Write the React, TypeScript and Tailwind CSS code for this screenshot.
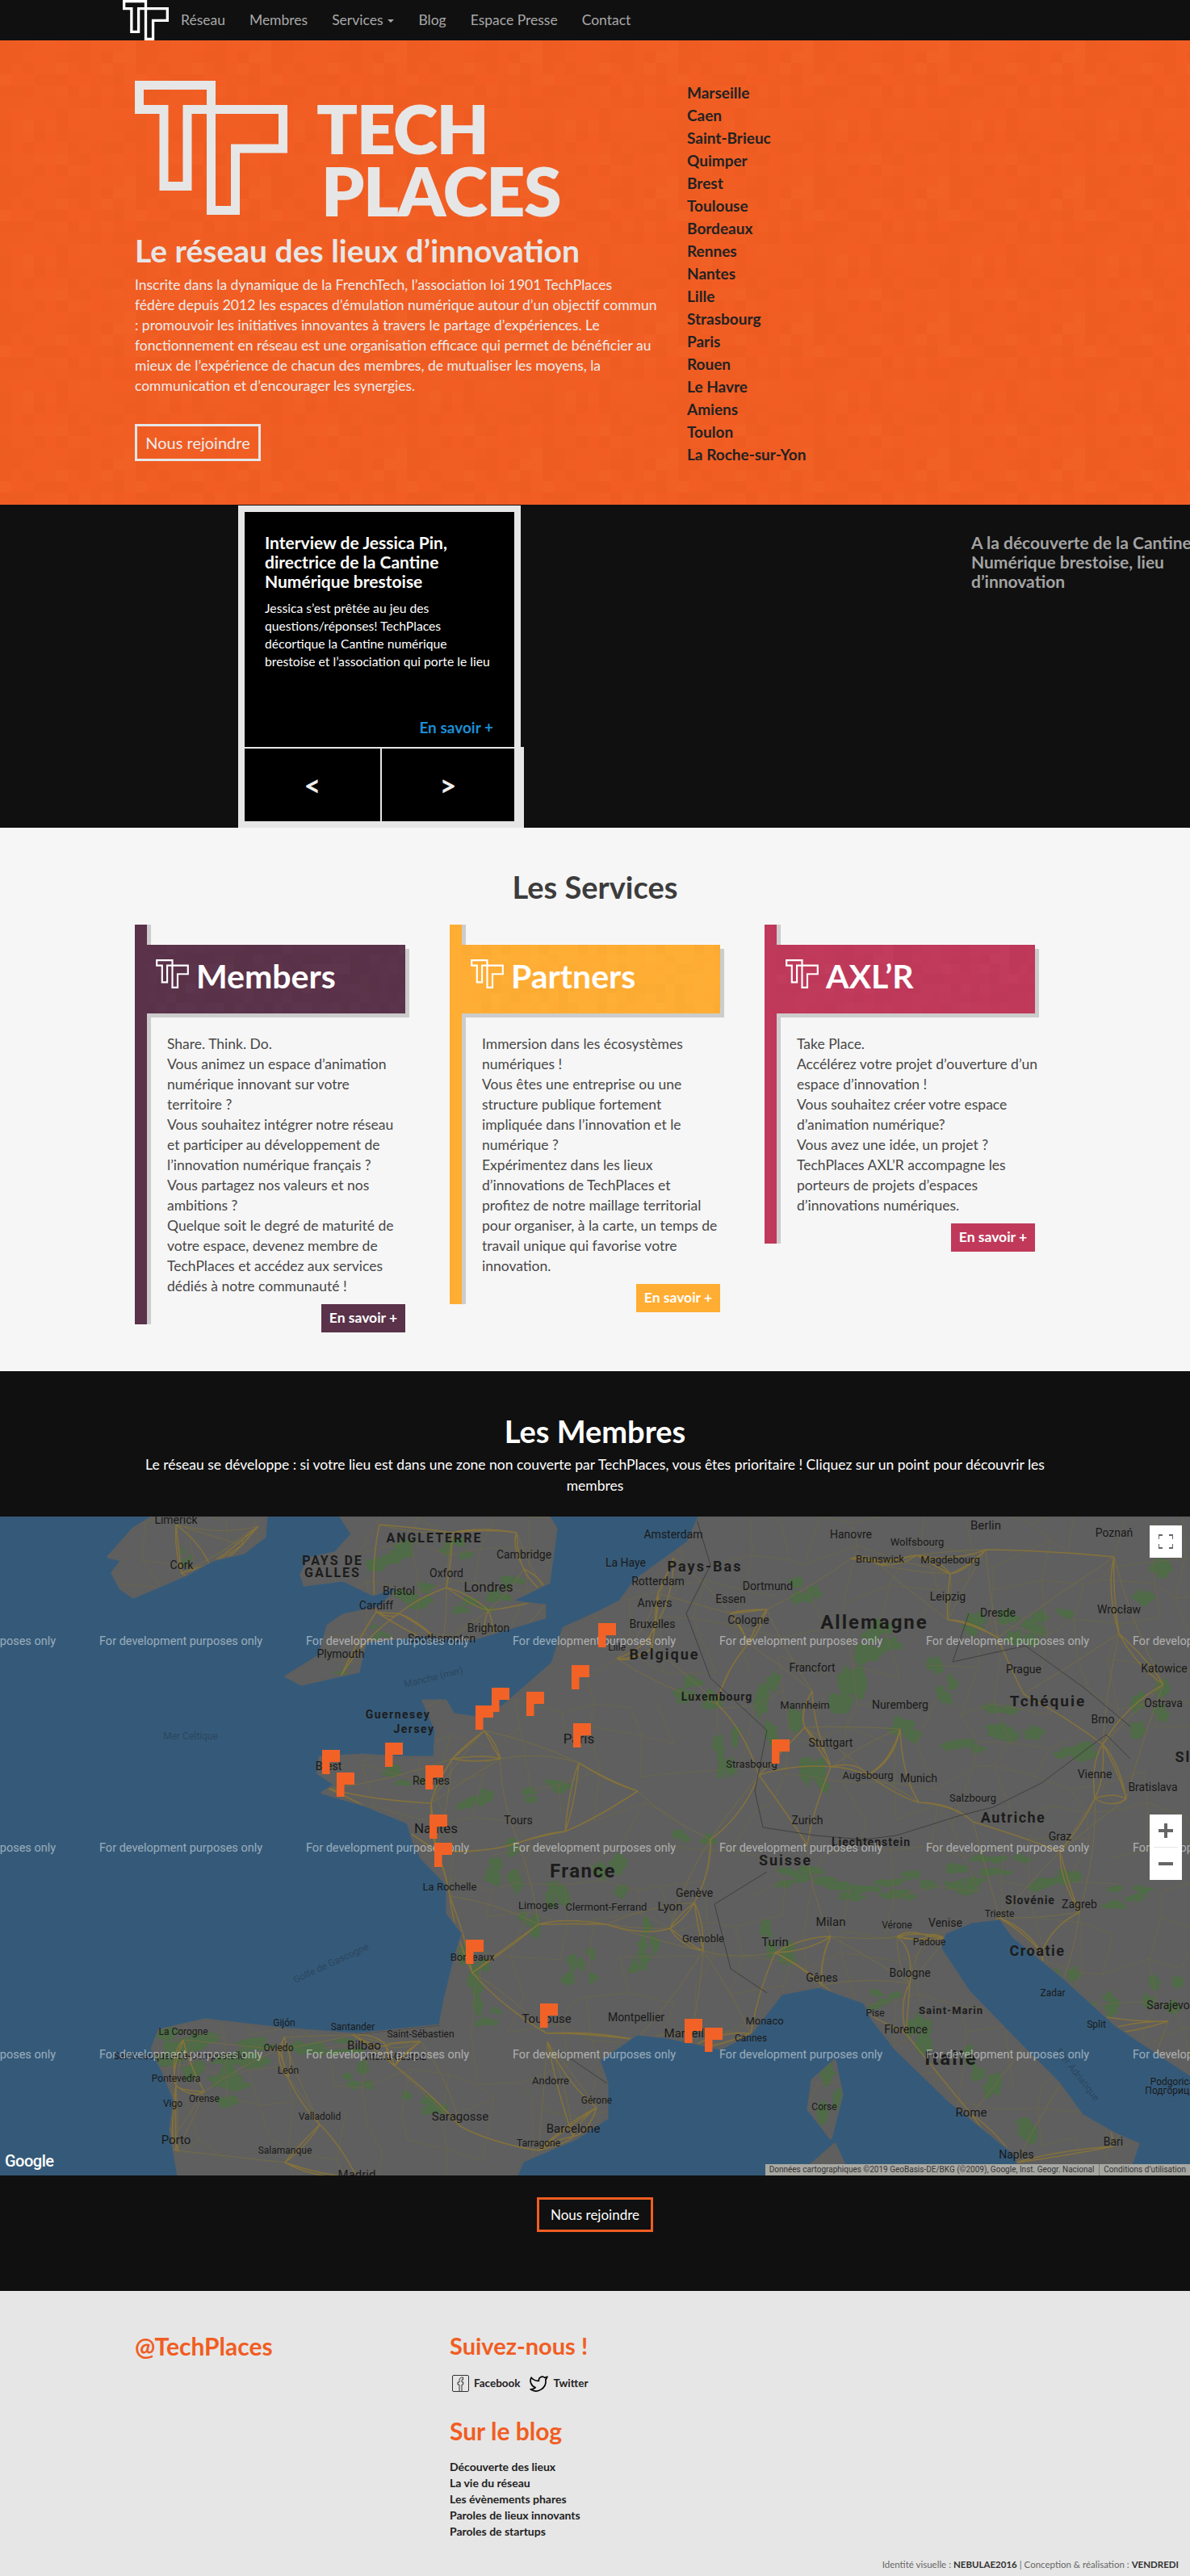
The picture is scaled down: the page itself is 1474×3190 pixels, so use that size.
import React from "react";
import { Twitter } from "lucide-react";

const LOGO = "M5.5 5.5H94.5V160.5H124.5V84H183.500V35.5H65V130.5H36V35.5H5.5Z";

function Logo({ w, h, sw, color, className }: { w: number; h: number; sw: number; color: string; className?: string }) {
  return (
    <svg width={w} height={h} viewBox="0 0 189 166" preserveAspectRatio="none" className={className}>
      <path d={LOGO} fill="none" stroke={color} strokeWidth={sw} strokeMiterlimit={10} />
    </svg>
  );
}

function rng(seed: number) {
  let s = seed;
  return () => {
    s = (s * 16807) % 2147483647;
    return s / 2147483647;
  };
}

function Mosaic({ id, cell = 14 }: { id: string; cell?: number }) {
  const r = rng(id.length * 977 + 31);
  const cells: React.ReactNode[] = [];
  for (let y = 0; y < 12; y++)
    for (let x = 0; x < 12; x++) {
      const v = r();
      cells.push(
        <rect key={x + "-" + y} x={x * cell} y={y * cell} width={cell} height={cell} fill={v > 0.5 ? "#fff" : "#000"} opacity={Math.abs(v - 0.5) * 0.03} />
      );
    }
  return (
    <svg className="absolute inset-0 h-full w-full pointer-events-none">
      <defs>
        <pattern id={id} width={cell * 12} height={cell * 12} patternUnits="userSpaceOnUse">
          {cells}
        </pattern>
      </defs>
      <rect width="100%" height="100%" fill={`url(#${id})`} />
    </svg>
  );
}

const NAV = ["Réseau", "Membres", "Services", "Blog", "Espace Presse", "Contact"];
const CITIES = ["Marseille", "Caen", "Saint-Brieuc", "Quimper", "Brest", "Toulouse", "Bordeaux", "Rennes", "Nantes", "Lille", "Strasbourg", "Paris", "Rouen", "Le Havre", "Amiens", "Toulon", "La Roche-sur-Yon"];
const HERO_LINES = [
  "Inscrite dans la dynamique de la FrenchTech, l’association loi 1901 TechPlaces",
  "fédère depuis 2012 les espaces d’émulation numérique autour d’un objectif commun",
  ": promouvoir les initiatives innovantes à travers le partage d’expériences. Le",
  "fonctionnement en réseau est une organisation efficace qui permet de bénéficier au",
  "mieux de l’expérience de chacun des membres, de mutualiser les moyens, la",
  "communication et d’encourager les synergies.",
];

const SERVICES = [
  {
    id: "m",
    name: "Members",
    bar: "bg-[#5a3249]",
    lines: ["Share. Think. Do.", "Vous animez un espace d’animation", "numérique innovant sur votre", "territoire ?", "Vous souhaitez intégrer notre réseau", "et participer au développement de", "l’innovation numérique français ?", "Vous partagez nos valeurs et nos", "ambitions ?", "Quelque soit le degré de maturité de", "votre espace, devenez membre de", "TechPlaces et accédez aux services", "dédiés à notre communauté !"],
  },
  {
    id: "pa",
    name: "Partners",
    bar: "bg-[#ffad33]",
    lines: ["Immersion dans les écosystèmes", "numériques !", "Vous êtes une entreprise ou une", "structure publique fortement", "impliquée dans l’innovation et le", "numérique ?", "Expérimentez dans les lieux", "d’innovations de TechPlaces et", "profitez de notre maillage territorial", "pour organiser, à la carte, un temps de", "travail unique qui favorise votre", "innovation."],
  },
  {
    id: "axl",
    name: "AXL’R",
    bar: "bg-[#c0395a]",
    lines: ["Take Place.", "Accélérez votre projet d’ouverture d’un", "espace d’innovation !", "Vous souhaitez créer votre espace", "d’animation numérique?", "Vous avez une idée, un projet ?", "TechPlaces AXL’R accompagne les", "porteurs de projets d’espaces", "d’innovations numériques."],
  },
];

const LAND = "866,0 1474,0 1474,691 1382,630 1316,570 1255,520 1239,498 1203,502 1170,516 1165,535 1200,588 1262,652 1310,700 1340,741 1382,765 1410,777 1400,805 1400,818 1262,818 1259,791 1175,723 1109,659 1081,623 1071,602 1015,582 968,591 930,640 893,659 827,645 789,641 742,673 752,702 752,745 714,770 648,798 639,818 221,818 211,759 216,723 202,688 188,659 197,636 254,623 348,634 442,641 545,630 550,602 564,545 573,516 554,491 554,456 522,423 512,402 505,379 453,358 399,342 415,332 394,318 396,298 448,295 495,298 538,298 540,265 524,228 552,228 562,245 590,249 623,235 661,202 684,182 698,138 740,119 768,105 787,79 820,55 852,32";
const GB = "422,0 436,22 415,45 382,52 373,72 377,85 425,79 462,97 495,85 472,112 425,122 406,135 396,172 354,198 373,208 444,192 453,155 519,148 585,152 675,125 675,110 632,105 680,82 689,15 680,0";
const IE = "189,0 165,15 134,50 151,54 139,70 149,89 165,100 231,72 264,54 302,45 328,25 330,0";
const CORSE = "1034,673 1043,716 1029,770 1001,734 1006,698";
const SARD = "1034,777 1053,818 987,818";

const FORESTS: [number, number, number, number][] = [
  [250, 660, 50, 26], [330, 665, 60, 22], [270, 700, 42, 30], [410, 655, 34, 10], [585, 575, 22, 38], [610, 620, 20, 12], [500, 320, 28, 12], [580, 345, 26, 16], [680, 340, 30, 14], [620, 430, 24, 30], [700, 470, 22, 26], [765, 440, 26, 30], [720, 560, 20, 24], [660, 500, 18, 22], [800, 530, 18, 34], [860, 395, 24, 16], [905, 300, 18, 34], [860, 210, 34, 22], [960, 235, 26, 40], [1000, 305, 26, 40], [1040, 200, 30, 40], [1100, 150, 36, 30], [1000, 100, 24, 22], [1160, 205, 22, 28], [1225, 140, 36, 26], [1300, 140, 30, 22], [1260, 250, 40, 22], [1130, 270, 28, 20], [1190, 290, 24, 16], [1330, 300, 34, 20], [1420, 240, 26, 30], [1430, 80, 30, 24],
  [1000, 440, 40, 16], [1060, 460, 50, 14], [1120, 455, 36, 16], [1180, 450, 44, 18], [1250, 430, 40, 14], [1310, 450, 36, 18], [1390, 470, 30, 14], [960, 520, 22, 30], [1100, 600, 26, 12], [1150, 630, 26, 30], [1215, 680, 24, 34], [1260, 745, 26, 24], [1310, 580, 24, 30], [1360, 620, 26, 28], [1440, 590, 24, 22], [1025, 720, 18, 38], [470, 50, 34, 20], [560, 45, 20, 16], [590, 105, 28, 14], [520, 95, 28, 18], [640, 90, 22, 14], [470, 145, 14, 10], [420, 190, 14, 6], [232, 52, 8, 12], [440, 690, 22, 16], [525, 730, 26, 18],
];

const ROAD_GROUPS: [number, number][][] = [
  [[225, 70], [218, 10], [300, 35], [260, 60], [320, 12]],
  [[553, 88], [605, 116], [649, 65], [494, 120], [466, 118], [605, 166], [547, 160], [422, 198], [560, 20], [470, 10], [640, 20], [680, 100]],
  [[407, 337], [534, 355], [540, 414], [642, 404], [717, 305], [764, 176], [808, 163], [811, 137], [834, 51], [815, 95], [950, 115], [905, 120], [927, 157], [1006, 216], [1054, 52], [1090, 60], [1136, 48], [1177, 71], [1221, 41], [1380, 50], [1174, 128], [1236, 150], [1386, 145], [1268, 220], [1115, 263], [997, 261], [888, 232], [940, 320], [1029, 310], [1075, 320], [1138, 354], [1205, 378], [1356, 349], [1395, 350], [1366, 282], [1441, 208], [1000, 407], [860, 478], [830, 510], [667, 505], [751, 505], [557, 470], [585, 565], [677, 640], [788, 648], [853, 660], [871, 538], [930, 640], [600, 265], [560, 300], [620, 300], [700, 390], [790, 340], [880, 400], [1313, 415], [960, 540], [1029, 520], [1111, 520], [1171, 522], [1151, 520], [1018, 580], [1127, 578], [1122, 640], [1203, 740], [1259, 800], [1379, 780], [1238, 497], [1337, 490], [1290, 540], [1304, 605], [1358, 640], [1447, 625]],
  [[227, 648], [352, 645], [345, 660], [437, 642], [478, 655], [521, 650], [489, 680], [357, 695], [218, 705], [253, 712], [214, 770], [218, 785], [396, 753], [570, 755], [710, 768], [667, 785], [739, 732], [353, 800], [442, 818], [678, 650]],
];

function blob(cx: number, cy: number, rx: number, ry: number, r: () => number) {
  const pts: string[] = [];
  const n = 11;
  for (let i = 0; i < n; i++) {
    const a = (i / n) * Math.PI * 2;
    const k = 0.45 + r() * 0.75;
    pts.push(`${Math.round(cx + Math.cos(a) * rx * k)},${Math.round(cy + Math.sin(a) * ry * k)}`);
  }
  return pts.join(" ");
}

function forestBlobs() {
  const r = rng(99);
  const out: string[] = [];
  FORESTS.forEach(([x, y, rx, ry]) => {
    for (let i = 0; i < 5; i++) {
      out.push(blob(x + (r() - 0.5) * rx * 1.8, y + (r() - 0.5) * ry * 1.8, rx * 0.42, ry * 0.42, r));
    }
  });
  return out;
}

function roadPaths() {
  const r = rng(4242);
  const main: string[] = [];
  const minor: string[] = [];
  ROAD_GROUPS.forEach((g) => {
    g.forEach((p, i) => {
      const near = g
        .map((q, j) => ({ q, j, d: Math.hypot(q[0] - p[0], q[1] - p[1]) }))
        .filter((e) => e.j !== i && e.d < 190)
        .sort((a, b) => a.d - b.d)
        .slice(0, 4);
      near.forEach((e, k) => {
        if (e.j < i && k > 1) return;
        const mx = (p[0] + e.q[0]) / 2 + (r() - 0.5) * 26;
        const my = (p[1] + e.q[1]) / 2 + (r() - 0.5) * 26;
        const d = `M${p[0]} ${p[1]}Q${mx.toFixed(0)} ${my.toFixed(0)} ${e.q[0]} ${e.q[1]}`;
        (k < 2 ? main : minor).push(d);
      });
    });
  });
  const step = 46;
  const pt = (ix: number, iy: number) => {
    const h = Math.sin(ix * 12.9898 + iy * 78.233) * 43758.5453;
    const f = h - Math.floor(h);
    const h2 = Math.sin(ix * 39.346 + iy * 11.135) * 24634.6345;
    const f2 = h2 - Math.floor(h2);
    return [ix * step + (f - 0.5) * 34, iy * step + (f2 - 0.5) * 34];
  };
  let net = "";
  for (let ix = 0; ix < 33; ix++)
    for (let iy = 0; iy < 19; iy++) {
      const a = pt(ix, iy);
      const b = pt(ix + 1, iy);
      const c = pt(ix, iy + 1);
      if (r() > 0.3) net += `M${a[0].toFixed(0)} ${a[1].toFixed(0)}L${b[0].toFixed(0)} ${b[1].toFixed(0)}`;
      if (r() > 0.3) net += `M${a[0].toFixed(0)} ${a[1].toFixed(0)}L${c[0].toFixed(0)} ${c[1].toFixed(0)}`;
    }
  return { main: main.join(""), minor: minor.join(""), net };
}

type L = [string, number, number, number?, number?];
const LABELS: L[] = [
  ["Limerick", 218, 4], ["Cork", 225, 60], ["Cambridge", 649, 47], ["Oxford", 553, 70], ["Londres", 605, 87, 17], ["Bristol", 494, 92], ["Cardiff", 466, 110], ["Brighton", 605, 138], ["Southampton", 547, 151], ["Plymouth", 422, 170],
  ["Brest", 407, 309], ["Rennes", 534, 327], ["Nantes", 540, 386, 17], ["Tours", 642, 376], ["Paris", 717, 275, 17], ["Lille", 764, 162, 12],
  ["Amsterdam", 834, 22], ["Berlin", 1221, 11, 15], ["Hanovre", 1054, 22], ["Wolfsbourg", 1136, 31, 13], ["Poznań", 1380, 20], ["La Haye", 775, 57], ["Brunswick", 1090, 52, 13], ["Magdebourg", 1177, 53, 13], ["Rotterdam", 815, 80], ["Dortmund", 951, 86], ["Leipzig", 1174, 99], ["Essen", 905, 102], ["Anvers", 811, 107], ["Wrocław", 1386, 115], ["Bruxelles", 808, 133], ["Cologne", 927, 128], ["Dresde", 1236, 119], ["Francfort", 1006, 187], ["Prague", 1268, 189], ["Katowice", 1442, 188], ["Mannheim", 997, 233, 13], ["Nuremberg", 1115, 233], ["Ostrava", 1441, 231], ["Brno", 1366, 251], ["Stuttgart", 1029, 280], ["Strasbourg", 931, 306, 13], ["Augsbourg", 1075, 320, 13], ["Munich", 1138, 324], ["Vienne", 1356, 319], ["Bratislava", 1428, 335], ["Salzbourg", 1205, 348, 13], ["Zurich", 1000, 376], ["Graz", 1313, 396],
  ["La Rochelle", 557, 458, 13], ["Genève", 860, 466], ["Zagreb", 1337, 480], ["Limoges", 667, 481, 13], ["Clermont-Ferrand", 751, 483, 13], ["Lyon", 830, 483, 15], ["Trieste", 1238, 492, 12], ["Milan", 1029, 502, 15], ["Vérone", 1111, 506, 12], ["Venise", 1171, 503], ["Grenoble", 871, 522, 13], ["Padoue", 1151, 527, 12], ["Turin", 960, 527, 15], ["Bordeaux", 585, 545, 13], ["Gênes", 1018, 571, 14], ["Bologne", 1127, 565, 14], ["Zadar", 1304, 590, 12], ["Sarajevo", 1447, 605, 14], ["Toulouse", 677, 622, 15], ["Montpellier", 788, 620, 14], ["Pise", 1084, 615, 12], ["Monaco", 947, 624, 13], ["Florence", 1122, 635, 14], ["Split", 1358, 629, 12], ["Santander", 437, 632, 12], ["Gijón", 352, 627, 12], ["La Corogne", 227, 638, 12], ["Marseille", 853, 640, 15], ["Saint-Sébastien", 521, 641, 12], ["Cannes", 930, 646, 12], ["Bilbao", 451, 655, 15], ["Oviedo", 345, 658, 12], ["Vitoria-Gasteiz", 489, 669, 12], ["Saint-Jacques-de-Compostelle", 222, 668, 12], ["León", 357, 686, 12], ["Pontevedra", 218, 696, 12], ["Andorre", 682, 698, 13], ["Orense", 253, 721, 12], ["Gérone", 739, 723, 12], ["Vigo", 214, 727, 12], ["Podgorica", 1452, 700, 12], ["Подгорица", 1449, 711, 12], ["Rome", 1203, 738, 15], ["Valladolid", 396, 743, 12], ["Saragosse", 570, 743, 15], ["Barcelone", 710, 758, 15], ["Porto", 218, 772, 15], ["Tarragone", 667, 776, 12], ["Bari", 1379, 774, 14], ["Salamanque", 353, 785, 12], ["Naples", 1259, 790, 14], ["Madrid", 442, 815, 15], ["Corse", 1021, 731, 12],
];
const COUNTRIES: L[] = [
  ["ANGLETERRE", 538, 26, 16, 2], ["PAYS DE", 412, 54, 16, 2], ["GALLES", 412, 69, 16, 2], ["Guernesey", 493, 245, 14, 1.5], ["Jersey", 513, 263, 14, 1.5], ["Pays-Bas", 873, 62, 18, 2], ["Allemagne", 1083, 130, 24, 2], ["Belgique", 823, 171, 18, 2], ["Luxembourg", 888, 223, 14, 1], ["Tchéquie", 1298, 228, 19, 2], ["Autriche", 1255, 373, 18, 1.5], ["Liechtenstein", 1079, 403, 14, 1], ["Suisse", 973, 426, 18, 2], ["Slovaquie", 1504, 298, 18, 2], ["France", 722, 438, 24, 1.5], ["Slovénie", 1276, 475, 14, 1], ["Croatie", 1285, 538, 18, 1.5], ["Saint-Marin", 1178, 611, 13, 1], ["Italie", 1178, 670, 24, 2],
];
const MARKERS: [number, number][] = [[741, 132], [708, 184], [609, 212], [589, 234], [652, 217], [710, 256], [399, 289], [477, 280], [417, 317], [527, 308], [532, 369], [956, 276], [538, 404], [577, 524], [669, 603], [848, 622], [873, 633]];

function TMap() {
  const roads = roadPaths();
  const forests = forestBlobs();
  const wm: React.ReactNode[] = [];
  [154, 410, 666].forEach((y) =>
    [-133, 123, 379, 635, 891, 1147, 1403].forEach((x) =>
      wm.push(
        <text key={x + "/" + y} x={x} y={y + 5} fontSize={14.5} fontFamily="Roboto, Arial, sans-serif" fill="#fff" fillOpacity={0.5}>
          For development purposes only
        </text>
      )
    )
  );
  return (
    <svg width={1474} height={816} viewBox="0 0 1474 816" className="block">
      <defs>
        <clipPath id="landclip">
          <polygon points={LAND} />
          <polygon points={GB} />
          <polygon points={IE} />
          <polygon points={CORSE} />
          <polygon points={SARD} />
        </clipPath>
      </defs>
      <rect width={1474} height={816} fill="#355a79" />
      <g fill="#5f5f5f" stroke="#5f5f5f" strokeWidth={3} strokeLinejoin="round">
        <polygon points={LAND} />
        <polygon points={GB} />
        <polygon points={IE} />
        <polygon points={CORSE} />
        <polygon points={SARD} />
      </g>
      <g clipPath="url(#landclip)">
        {forests.map((f, i) => (
          <polygon key={i} points={f} fill="#4f6b47" />
        ))}
        <path d={roads.net} fill="none" stroke="#68664e" strokeWidth={1} />
        <path d={roads.minor} fill="none" stroke="#746c45" strokeWidth={1} />
        <path d={roads.main} fill="none" stroke="#85723a" strokeWidth={1.5} />
        <path d="M862 0L880 60 850 120 880 200 950 265 935 340 945 385 1010 395 1070 400 1110 395 1190 370 1230 360 1290 330 1330 300 1370 270 1400 300M1200 120L1180 180 1270 160 1340 210 1400 260M950 440L885 480 905 560 950 590M690 660L752 702M440 641L545 630" fill="none" stroke="#3f3f3f" strokeWidth={1} />
      </g>
      {LABELS.map(([t, x, y, s], i) => (
        <text key={i} x={x} y={y + (s ?? 14) * 0.36} textAnchor="middle" fontSize={s ?? 14} fontFamily="Roboto, Arial, sans-serif" fill="#191919">
          {t}
        </text>
      ))}
      {COUNTRIES.map(([t, x, y, s, ls], i) => (
        <text key={i} x={x} y={y + (s ?? 14) * 0.36} textAnchor="middle" fontSize={s} fontWeight={700} letterSpacing={ls} fontFamily="Roboto, Arial, sans-serif" fill="#1c1c1c">
          {t}
        </text>
      ))}
      <text x={236} y={276} textAnchor="middle" fontSize={12} fontFamily="Roboto, Arial, sans-serif" fill="#2b4660">Mer Celtique</text>
      <text x={537} y={203} textAnchor="middle" fontSize={12} fontFamily="Roboto, Arial, sans-serif" fill="#2b4660" transform="rotate(-14 537 199)">Manche (mer)</text>
      <text x={410} y={557} textAnchor="middle" fontSize={12} fontFamily="Roboto, Arial, sans-serif" fill="#2b4660" transform="rotate(-25 410 553)">Golfe de Gascogne</text>
      <text x={1335} y={695} textAnchor="middle" fontSize={12} fontFamily="Roboto, Arial, sans-serif" fill="#2b4660" transform="rotate(52 1335 691)">Mer Adriatique</text>
      {wm}
      {MARKERS.map(([x, y], i) => (
        <path key={i} d={`M${x} ${y}h22v15h-12.5v15h-9.5z`} fill="#f26226" />
      ))}
    </svg>
  );
}

export default function App() {
  return (
    <div className="w-[1474px] overflow-hidden font-['Lato','Noto_Sans',sans-serif] text-[#444]">
      <nav className="flex h-[50px] items-center bg-[#101010] pl-[152px]">
        <Logo w={57} h={50} sw={11} color="#fff" />
        <ul className="ml-[15px] flex gap-[30px] text-[17.5px] text-[#a8a8a8]">
          {NAV.map((n) => (
            <li key={n} className="flex items-center whitespace-nowrap">
              {n}
              {n === "Services" && <span className="ml-[6px] mt-[2px] h-0 w-0 border-x-[4px] border-t-[4px] border-x-transparent border-t-[#a8a8a8]" />}
            </li>
          ))}
        </ul>
      </nav>

      <header className="relative flex h-[575px] bg-[#f15d22] pl-[167px] pt-[50px]">
        <Mosaic id="hero" />
        <div className="relative w-[684px]">
          <div className="flex h-[166px]">
            <Logo w={189} h={166} sw={11} color="#e6e6e6" />
            <div className="ml-[36px] mt-[20px] flex flex-col text-[84px] font-[800] leading-[77px] text-[#e6e6e6]">
              <span className="tracking-[-1.5px]">TECH</span>
              <span className="ml-[6px] tracking-[-1.5px]">PLACES</span>
            </div>
          </div>
          <h1 className="mt-[24px] text-[39px] font-bold leading-[40px] text-[#e6e6e6] whitespace-nowrap">Le réseau des lieux d’innovation</h1>
          <p className="mt-[10px] text-[17.5px] leading-[25px] text-[#ececec] whitespace-nowrap">
            {HERO_LINES.map((l) => (
              <span key={l} className="block">{l}</span>
            ))}
          </p>
          <a className="mt-[35px] flex h-[46px] w-[156px] items-center justify-center border-[3px] border-[#e6e6e6] text-[20px] text-[#ececec]">Nous rejoindre</a>
        </div>
        <ul className="relative pt-[1px] text-[19px] font-bold leading-[28px] text-[#222] whitespace-nowrap">
          {CITIES.map((c) => (
            <li key={c}>{c}</li>
          ))}
        </ul>
      </header>

      <section className="flex h-[400px] overflow-hidden bg-[#101010] pl-[295px]">
        <div className="mt-[1px] flex w-[354px] flex-none flex-col">
          <div className="h-[8px] w-[350px] bg-[#e6e6e6]" />
          <div className="flex h-[292px] w-[350px] border-x-[8px] border-[#e6e6e6] bg-black">
            <div className="flex w-full flex-col pl-[25px] pr-[26px]">
              <h3 className="mt-[26px] text-[21px] font-bold leading-[24px] text-white whitespace-nowrap">Interview de Jessica Pin,<br />directrice de la Cantine<br />Numérique brestoise</h3>
              <p className="mt-[10px] text-[15.7px] leading-[22px] text-white whitespace-nowrap">Jessica s’est prêtée au jeu des<br />questions/réponses! TechPlaces<br />décortique la Cantine numérique<br />brestoise et l’association qui porte le lieu</p>
              <a className="mt-auto mb-[10px] text-right text-[19px] font-bold text-[#1c8fd6]">En savoir +</a>
            </div>
          </div>
          <div className="flex h-[100px] border-y-[2px] border-b-[8px] border-t-transparent border-b-[#e6e6e6] border-l-[8px] border-l-[#e6e6e6] border-r-[12px] border-r-[#e6e6e6] bg-[#e6e6e6]">
            <div className="flex w-[168px] items-center justify-center bg-black text-[36px] font-bold text-[#eee]">&lt;</div>
            <div className="ml-[2px] flex flex-1 items-center justify-center bg-black text-[36px] font-bold text-[#eee]">&gt;</div>
          </div>
        </div>
        <div className="ml-[554px] flex-none pt-[35px]">
          <h3 className="text-[21px] font-bold leading-[24px] text-[#a3a3a3] whitespace-nowrap">A la découverte de la Cantine<br />Numérique brestoise, lieu<br />d’innovation</h3>
        </div>
      </section>

      <section className="h-[673px] bg-[#f6f6f6] pt-[53px]">
        <h2 className="text-center text-[38px] font-bold leading-[40px] text-[#3c3c3c]">Les Services</h2>
        <div className="mt-[27px] flex items-start gap-[55px] pl-[167px]">
          {SERVICES.map((s) => (
            <article key={s.id} className="flex w-[335px]">
              <div className={`w-[15px] flex-none shadow-[5px_0_0_#ccc] ${s.bar}`} />
              <div className="relative -mb-[10px] flex w-[320px] flex-col pt-[25px]">
                <div className={`relative flex h-[85px] items-start pl-[11px] pt-[18px] shadow-[5px_5px_0_#ccc] ${s.bar}`}>
                  <Mosaic id={"h" + s.id} cell={12} />
                  <Logo w={41} h={36} sw={10} color="#fff" className="relative" />
                  <span className="relative ml-[9px] mt-[-4px] text-[41px] font-bold leading-[50px] text-white">{s.name}</span>
                </div>
                <p className="pl-[25px] pt-[25px] text-[17.5px] leading-[25px] text-[#484848] whitespace-nowrap">
                  {s.lines.map((l) => (
                    <span key={l} className="block">{l}</span>
                  ))}
                </p>
                <a className={`mt-[10px] flex h-[35px] w-[104px] items-center justify-center self-end text-[17.5px] font-bold text-white ${s.bar}`}>En savoir +</a>
              </div>
            </article>
          ))}
        </div>
      </section>

      <section className="bg-[#101010]">
        <div className="h-[180px] pt-[54px] text-center text-white">
          <h2 className="text-[38px] font-bold leading-[40px]">Les Membres</h2>
          <p className="mt-[9px] text-[17.5px] leading-[26px]">Le réseau se développe : si votre lieu est dans une zone non couverte par TechPlaces, vous êtes prioritaire ! Cliquez sur un point pour découvrir les<br />membres</p>
        </div>
        <div className="relative h-[816px] overflow-hidden">
          <TMap />
          <button className="absolute left-[1424px] top-[11px] flex h-[40px] w-[40px] items-center justify-center bg-white">
            <svg width="18" height="18" viewBox="0 0 18 18" fill="none" stroke="#666" strokeWidth="2"><path d="M0 6V1h5M13 1h5v5M18 12v5h-5M5 17H0v-5" /></svg>
          </button>
          <div className="absolute left-[1424px] top-[369px] flex h-[81px] w-[40px] flex-col items-center bg-white">
            <svg width="40" height="40" viewBox="0 0 40 40" fill="#666"><path d="M18 11h4v7h7v4h-7v7h-4v-7h-7v-4h7z" /></svg>
            <div className="h-px w-[30px] bg-[#e6e6e6]" />
            <svg width="40" height="40" viewBox="0 0 40 40" fill="#666"><path d="M11 18h18v4H11z" /></svg>
          </div>
          <span className="absolute left-[6px] top-[786px] font-['Roboto',sans-serif] text-[20px] font-medium leading-[24px] tracking-[-0.5px] text-white">Google</span>
          <div className="absolute bottom-0 right-0 flex h-[14px] items-center bg-[#a8a8a3] font-['Roboto',sans-serif] text-[10px] leading-[14px] text-[#333] whitespace-nowrap">
            <span className="pl-[5px] pr-[6px]">Données cartographiques ©2019 GeoBasis-DE/BKG (©2009), Google, Inst. Geogr. Nacional</span>
            <span className="border-l border-[#777] px-[5px]">Conditions d’utilisation</span>
          </div>
        </div>
        <div className="flex h-[143px] justify-center pt-[27px]">
          <a className="flex h-[43px] w-[144px] items-center justify-center border-[3px] border-[#f15d22] text-[17px] text-white">Nous rejoindre</a>
        </div>
      </section>

      <footer className="flex h-[353px] flex-col bg-[#e6e6e6]">
        <div className="flex pl-[167px] pt-[50px]">
          <div className="w-[390px]">
            <h4 className="text-[30px] font-bold leading-[36px] text-[#f15d22]">@TechPlaces</h4>
          </div>
          <div>
            <h4 className="text-[29px] font-bold leading-[36px] text-[#f15d22]">Suivez-nous !</h4>
            <div className="ml-[3px] mt-[16px] flex items-center text-[13.5px] font-bold text-[#222]">
              <svg width="21" height="21" viewBox="0 0 21 21" fill="none" stroke="#333"><rect x="0.5" y="0.5" width="20" height="20" rx="1.5" /><path d="M9 20v-8H7V9h2V6.500C9 4 10.500 3 13.500 3v3H12v3h2l-.5 3H12v8" /></svg>
              <span className="ml-[6px]">Facebook</span>
              <Twitter size={25} strokeWidth={1.6} className="ml-[10px] text-black" />
              <span className="ml-[6px]">Twitter</span>
            </div>
            <h4 className="mt-[28px] text-[30px] font-bold leading-[36px] text-[#f15d22]">Sur le blog</h4>
            <ul className="mt-[17px] text-[14px] font-bold leading-[20px] text-[#222]">
              {["Découverte des lieux", "La vie du réseau", "Les évènements phares", "Paroles de lieux innovants", "Paroles de startups"].map((l) => (
                <li key={l}>{l}</li>
              ))}
            </ul>
          </div>
        </div>
        <p className="mt-auto pb-[6px] pr-[14px] text-right text-[11.5px] text-[#666]">Identité visuelle : <b className="text-[#333]">NEBULAE2016</b> | Conception &amp; réalisation : <b className="text-[#333]">VENDREDI</b></p>
      </footer>
    </div>
  );
}
